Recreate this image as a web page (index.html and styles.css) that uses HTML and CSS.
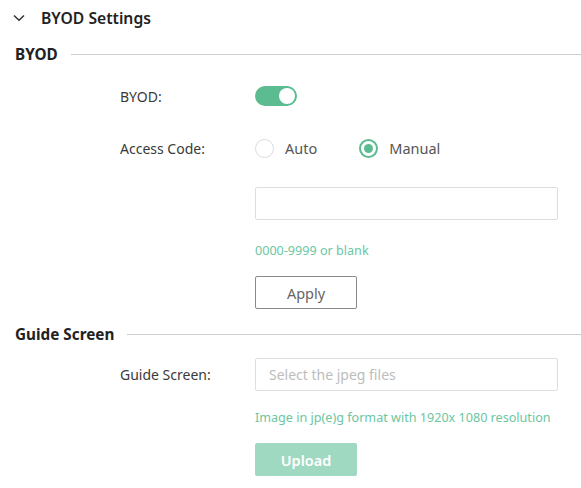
FILE: index.html
```html
<!DOCTYPE html>
<html>
<head>
<meta charset="utf-8">
<link rel="stylesheet" href="styles.css">
</head>
<body>
<div class="page">
  <div class="header">
    <svg class="chev" width="12" height="8" viewBox="0 0 12 8"><path d="M1 1.5 L6 6.3 L11 1.5" fill="none" stroke="#333" stroke-width="1.5"/></svg>
    <span class="title">BYOD Settings</span>
  </div>

  <div class="section first">
    <span class="section-name">BYOD</span>
    <span class="rule"></span>
  </div>

  <div class="row row-toggle">
    <div class="label">BYOD:</div>
    <div class="control">
      <span class="toggle"><span class="knob"></span></span>
    </div>
  </div>

  <div class="row row-radio">
    <div class="label">Access Code:</div>
    <div class="control radios">
      <span class="radio-item"><span class="radio"></span><span class="radio-text">Auto</span></span>
      <span class="radio-item"><span class="radio checked"><span class="dot"></span></span><span class="radio-text">Manual</span></span>
    </div>
  </div>

  <div class="row row-input">
    <div class="label"></div>
    <div class="control"><div class="input"></div></div>
  </div>

  <div class="row row-hint">
    <div class="label"></div>
    <div class="control hint">0000-9999 or blank</div>
  </div>

  <div class="row row-btn">
    <div class="label"></div>
    <div class="control"><button class="btn btn-outline">Apply</button></div>
  </div>

  <div class="section second">
    <span class="section-name">Guide Screen</span>
    <span class="rule"></span>
  </div>

  <div class="row row-guide">
    <div class="label">Guide Screen:</div>
    <div class="control"><div class="input placeholder">Select the jpeg files</div></div>
  </div>

  <div class="row row-hint2">
    <div class="label"></div>
    <div class="control hint">Image in jp(e)g format with 1920x 1080 resolution</div>
  </div>

  <div class="row row-btn2">
    <div class="label"></div>
    <div class="control"><button class="btn btn-fill">Upload</button></div>
  </div>
</div>
</body>
</html>
```

FILE: styles.css
```css
html, body {
  margin: 0;
  padding: 0;
  background: #fff;
}
body {
  font-family: "Noto Sans", "Open Sans", sans-serif;
  color: #333;
  width: 581px;
  height: 488px;
  overflow: hidden;
}
.page {
  display: flex;
  flex-direction: column;
}
.header {
  height: 36px;
  display: flex;
  align-items: center;
  padding-left: 13px;
}
.chev {
  margin-right: 16px;
}
.title {
  font-size: 15.7px;
  font-weight: 600;
  color: #222;
}
.section {
  display: flex;
  align-items: center;
  height: 20px;
  padding-left: 15px;
}
.section.first { margin-top: 8px; }
.section.second { margin-top: 15px; }
.section-name {
  font-size: 15.3px;
  font-weight: 700;
  color: #222;
  margin-right: 13px;
}
.rule {
  flex: 1;
  height: 1px;
  background: #cfcfcf;
}
.row {
  display: grid;
  grid-template-columns: 135px 303px;
  padding-left: 120px;
  align-items: center;
}
.label {
  font-size: 14px;
  color: #3a3a3a;
}
.row-toggle { height: 40px; margin-top: 12px; }
.row-radio { height: 40px; margin-top: 12px; }
.row-input { margin-top: 19px; }
.row-hint { margin-top: 21px; height: 20px; }
.row-btn { margin-top: 15px; }
.row-guide { margin-top: 14px; }
.row-hint2 { margin-top: 17px; height: 20px; }
.row-btn2 { margin-top: 15px; }

.toggle {
  display: flex;
  align-items: center;
  justify-content: flex-end;
  width: 42px;
  height: 20px;
  border-radius: 10px;
  background: #5cbc91;
  box-sizing: border-box;
  padding-right: 2px;
}
.knob {
  width: 16px;
  height: 16px;
  border-radius: 50%;
  background: #fff;
}
.radios {
  display: flex;
  align-items: center;
}
.radio-item {
  display: flex;
  align-items: center;
  margin-right: 42px;
}
.radio {
  width: 19px;
  height: 19px;
  box-sizing: border-box;
  border: 1.5px solid #dcdcdc;
  border-radius: 50%;
  display: flex;
  align-items: center;
  justify-content: center;
  margin-right: 11px;
}
.radio.checked {
  border: 2px solid #5cbc91;
}
.dot {
  width: 9px;
  height: 9px;
  border-radius: 50%;
  background: #5cbc91;
}
.radio-text {
  font-size: 14.5px;
  color: #555;
}
.input {
  height: 33px;
  box-sizing: border-box;
  border: 1px solid #dedede;
  border-radius: 2px;
  display: flex;
  align-items: center;
  padding-left: 13px;
}
.placeholder {
  font-size: 14px;
  color: #bdbdbd;
}
.hint {
  font-size: 12.6px;
  color: #6cc6a0;
  line-height: 20px;
}
.btn {
  width: 102px;
  height: 33px;
  box-sizing: border-box;
  border-radius: 2px;
  font-family: inherit;
  font-size: 14.5px;
  padding: 0;
}
.btn-outline {
  background: #fff;
  border: 1px solid #8a8a8a;
  color: #666;
}
.btn-fill {
  background: #9fd9c1;
  border: none;
  color: #fff;
  font-weight: 600;
}
```
